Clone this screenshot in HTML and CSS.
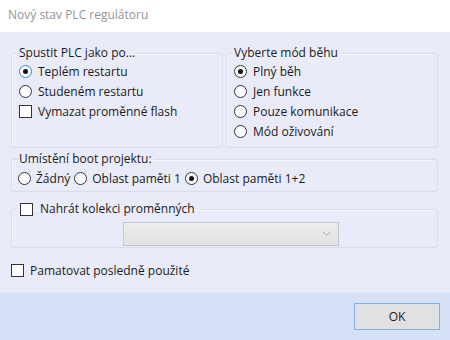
FILE: index.html
```html
<!DOCTYPE html>
<html lang="cs">
<head>
<meta charset="UTF-8" />
<title>Nový stav PLC regulátoru</title>
<link rel="stylesheet" href="styles.css">
</head>
<body>

<div class="titlebar">Nový stav PLC regulátoru</div>

<div class="main">
  <div class="row">
    <fieldset class="group">
      <legend>Spustit PLC jako po...</legend>
      <label class="opt"><span class="radio on hot"></span>Teplém restartu</label>
      <label class="opt"><span class="radio"></span>Studeném restartu</label>
      <label class="opt"><span class="check"></span>Vymazat proměnné flash</label>
    </fieldset>
    <fieldset class="group">
      <legend>Vyberte mód běhu</legend>
      <label class="opt"><span class="radio on"></span>Plný běh</label>
      <label class="opt"><span class="radio"></span>Jen funkce</label>
      <label class="opt"><span class="radio"></span>Pouze komunikace</label>
      <label class="opt"><span class="radio"></span>Mód oživování</label>
    </fieldset>
  </div>

  <fieldset class="group boot">
    <legend>Umístění boot projektu:</legend>
    <div class="inline">
      <label class="opt"><span class="radio"></span>Žádný</label>
      <label class="opt"><span class="radio"></span>Oblast paměti 1</label>
      <label class="opt"><span class="radio on"></span>Oblast paměti 1+2</label>
    </div>
  </fieldset>

  <fieldset class="group vars">
    <legend><label class="opt"><span class="check"></span>Nahrát kolekci proměnných</label></legend>
    <div class="select">
      <svg width="9" height="6" viewBox="0 0 9 6"><path d="M1 1l3.5 3.5L8 1" fill="none" stroke="#a8a8a8" stroke-width="1"/></svg>
    </div>
  </fieldset>

  <label class="opt remember"><span class="check"></span>Pamatovat posledně použité</label>
</div>

<div class="footer">
  <button class="btn">OK</button>
</div>

</body>
</html>
```

FILE: styles.css
```css
body {
  margin: 0;
  width: 450px;
  height: 340px;
  font-family: "Open Sans", sans-serif;
  font-size: 12px;
  color: #1b1b1b;
  background: #e9ebf9;
  overflow: hidden;
}
.titlebar {
  height: 32px;
  line-height: 30px;
  padding-left: 8px;
  background: #fff;
  color: #959595;
  font-size: 12px;
}
.main {
  height: 261px;
  padding: 13px 12px 0 11px;
  box-sizing: border-box;
  background: #e9ebf9;
  border-bottom: 1px solid #e2e7f6;
}
.row {
  display: grid;
  grid-template-columns: 212px 212px;
  gap: 3px;
}
.group {
  margin: 0;
  padding: 0 6px 0 6px;
  border: 1px solid #d9dcea;
  border-radius: 3px;
  box-shadow: inset 1px 1px 0 #f5f6fc;
  min-width: 0;
  box-sizing: border-box;
}
.group legend {
  padding: 0 2px 0 1px;
  line-height: 16px;
}
.row .group {
  height: 103px;
}
.opt {
  display: flex;
  align-items: center;
  height: 20px;
  white-space: nowrap;
}
.radio, .check {
  width: 11px;
  height: 11px;
  border: 1px solid #333;
  background: #fff;
  margin-right: 6px;
  flex: none;
  box-sizing: content-box;
}
.radio {
  border-radius: 50%;
  position: relative;
}
.radio.hot {
  border-color: #3c7fd8;
}
.radio.on::after {
  content: "";
  position: absolute;
  left: 3px;
  top: 3px;
  width: 5px;
  height: 5px;
  border-radius: 50%;
  background: #111;
}
.row .group .opt {
  margin-left: 1px;
}
.boot {
  margin-top: 3px;
  height: 41px;
}
.inline {
  display: flex;
  gap: 4px;
  margin-top: 1px;
}
.inline .radio {
  margin-right: 5px;
}
.vars {
  margin-top: 7px;
  height: 49px;
  padding-left: 5px;
}
.vars legend {
  padding: 0 6px 0 3px;
}
.vars legend .check {
  margin-right: 7px;
}
.select {
  width: 207px;
  height: 22px;
  margin: 3px 0 0 106px;
  border: 1px solid #c5c7cf;
  background: linear-gradient(#ececec, #e3e3e3);
  display: flex;
  align-items: center;
  justify-content: flex-end;
  padding-right: 7px;
  box-sizing: content-box;
}
.select svg {
  display: block;
}
.remember {
  margin-top: 12px;
}
.footer {
  height: 47px;
  background: #d6e1f8;
  display: flex;
  justify-content: flex-end;
  align-items: flex-start;
  padding: 10px 10px 0 0;
  box-sizing: border-box;
}
.btn {
  width: 86px;
  height: 27px;
  border: 1px solid #7eb4ea;
  background: #e1e1e1;
  font-family: "Open Sans", sans-serif;
  font-size: 12px;
  color: #1b1b1b;
  padding: 0;
}
```
